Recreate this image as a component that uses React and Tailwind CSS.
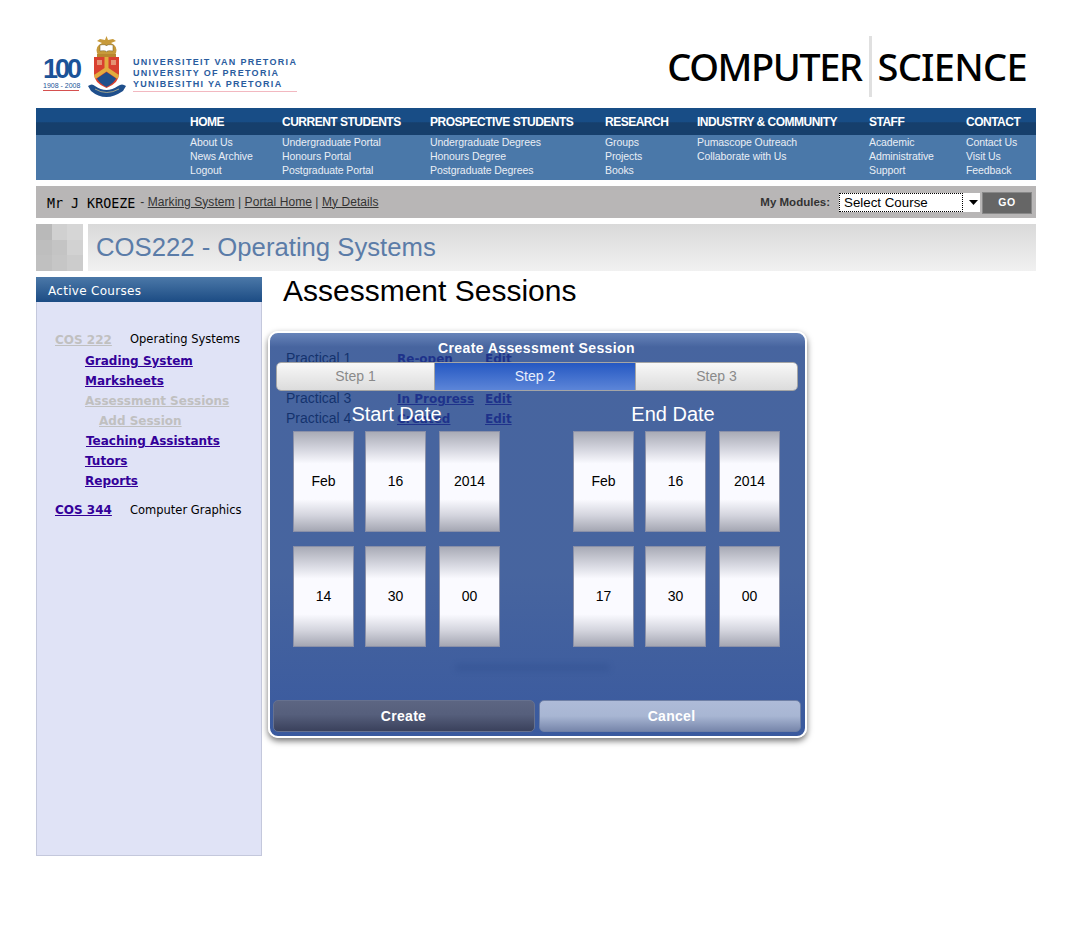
const arial = { fontFamily: '"Liberation Sans", Arial, sans-serif' };
const dv = { fontFamily: '"DejaVu Sans", Verdana, sans-serif' };

const navCols = [
  { w: 'w-[92px]', h: 'HOME', items: ['About Us', 'News Archive', 'Logout'] },
  { w: 'w-[148px]', h: 'CURRENT STUDENTS', items: ['Undergraduate Portal', 'Honours Portal', 'Postgraduate Portal'] },
  { w: 'w-[175px]', h: 'PROSPECTIVE STUDENTS', items: ['Undergraduate Degrees', 'Honours Degree', 'Postgraduate Degrees'] },
  { w: 'w-[92px]', h: 'RESEARCH', items: ['Groups', 'Projects', 'Books'] },
  { w: 'w-[172px]', h: 'INDUSTRY & COMMUNITY', items: ['Pumascope Outreach', 'Collaborate with Us'] },
  { w: 'w-[97px]', h: 'STAFF', items: ['Academic', 'Administrative', 'Support'] },
  { w: 'w-[70px]', h: 'CONTACT', items: ['Contact Us', 'Visit Us', 'Feedback'] },
];

function Crest() {
  return (
    <svg width="38" height="61" viewBox="0 0 38 61" className="mt-[36px] ml-[6px] shrink-0">
      <path d="M14 7 L9 5 L12 3 L17 4 L18.5 0 L20 4 L25 3 L28 5 L23 7 Q30 10 28 17 L26 20 H11 L9 17 Q7 10 14 7Z" fill="#c79a3a" />
      <path d="M12 9 Q18 8 18.5 10 Q19 8 25 9 V15 Q19 14 18.5 16 Q18 14 12 15Z" fill="#ffffff" stroke="#6b5a2a" strokeWidth="0.5" />
      <rect x="9" y="18" width="19" height="3" fill="#b8862e" />
      <path d="M6 21 H31 V38 Q31 47 18.5 52 Q6 47 6 38Z" fill="#d9402f" />
      <path d="M16.5 21 H20.5 V32 L31 39 L29.5 43 L18.5 35.5 L7.5 43 L6 39 L16.5 32Z" fill="#e2ac3f" />
      <path d="M18.5 36 L28 42.5 Q25 48 18.5 51 Q12 48 9 42.5Z" fill="#1f4f8c" />
      <rect x="9" y="24" width="5" height="5" fill="#ecc9a0" opacity="0.6" />
      <rect x="23" y="24" width="5" height="5" fill="#ecc9a0" opacity="0.6" />
      <path d="M0 50 Q4 47 7 50 Q18.5 58 30 50 Q34 47 38 50 L35 55 Q26 61 18.5 61 Q10 61 3 55Z" fill="#1f4f8c" />
      <path d="M7 53 Q18.5 60 31 53" fill="none" stroke="#d6c48a" strokeWidth="0.7" />
    </svg>
  );
}

function Wheel({ text }) {
  return (
    <div className="w-[61px] h-[101px] flex items-center justify-center border border-[#8a90a8] bg-[linear-gradient(to_bottom,#a9abb6_0%,#d6d7e0_18%,#fafaff_32%,#fafaff_68%,#d4d5de_84%,#a5a7b3_100%)] text-[14px] text-black">
      {text}
    </div>
  );
}

function DateColumn({ title, rows, className, titleClass }) {
  return (
    <div className={className}>
      <div className={`text-[20px] leading-[24px] text-white text-center ${titleClass}`}>{title}</div>
      <div className="flex flex-col gap-[14px] mt-[5px]">
        {rows.map((r, i) => (
          <div key={i} className="flex">
            <Wheel text={r[0]} />
            <div className="ml-[11px]"><Wheel text={r[1]} /></div>
            <div className="ml-[13px]"><Wheel text={r[2]} /></div>
          </div>
        ))}
      </div>
    </div>
  );
}

function Modal() {
  return (
    <div
      style={arial}
      className="absolute left-[6px] top-[54px] w-[539px] h-[407px] rounded-[10px] border-[2px] border-white shadow-[0_3px_6px_rgba(0,0,0,0.55)] bg-[linear-gradient(to_bottom,rgba(70,105,170,0.82)_0px,rgba(25,62,135,0.8)_14px,rgba(25,62,135,0.8)_60%,rgba(20,58,140,0.84)_100%)] px-[6px]"
    >
      <div className="text-[14px] leading-[16px] font-bold text-white text-center pt-[7px] pr-[2px] tracking-[0.4px]">Create Assessment Session</div>
      <div className="flex mt-[6px] w-[522px] h-[29px] rounded-[5px] border border-[#a5a5a5] overflow-hidden text-[14px]">
        <div className="w-[158px] flex items-center justify-center text-[#8a8a8a] bg-[linear-gradient(to_bottom,#f8f8f8,#dcdcdc)] border-r border-[#a5a5a5]">Step 1</div>
        <div className="w-[200px] flex items-center justify-center text-[#e8eefb] bg-[linear-gradient(to_bottom,#2558c2,#5c85d8)]">Step 2</div>
        <div className="flex-1 flex items-center justify-center text-[#8a8a8a] bg-[linear-gradient(to_bottom,#f8f8f8,#dcdcdc)] border-l border-[#a5a5a5]">Step 3</div>
      </div>
      <div className="flex mt-[11px]">
        <DateColumn title="Start Date" className="ml-[17px]" titleClass="" rows={[['Feb', '16', '2014'], ['14', '30', '00']]} />
        <DateColumn title="End Date" className="ml-[73px] mt-[1px]" titleClass="pr-[7px] -mt-[1px] mb-[1px]" rows={[['Feb', '16', '2014'], ['17', '30', '00']]} />
      </div>
      <div className="absolute left-[185px] top-[331px] w-[155px] h-[7px] rounded-full bg-[#1c3d7c] opacity-20 blur-[3px]" />
      <div className="absolute left-[3px] bottom-[4px] flex gap-[4px] text-[14px] font-bold text-white tracking-[0.3px]">
        <div className="w-[262px] h-[32px] pr-[1px] rounded-[5px] border border-[#66718f] flex items-center justify-center bg-[linear-gradient(to_bottom,#5c6582,#565f7c_45%,#3a415c)]">Create</div>
        <div className="w-[262px] h-[32px] pl-[3px] rounded-[5px] border border-[#6f80a6] flex items-center justify-center bg-[linear-gradient(to_bottom,#aebbd8,#a8b6d3_50%,#7786ab)]">Cancel</div>
      </div>
    </div>
  );
}

function SideLink({ children, pad, muted }) {
  return (
    <div className={`h-[20px] leading-[20px] ${pad}`}>
      <span className={`underline font-bold text-[12px] ${muted ? 'text-[#c0c0c0]' : 'text-[#330099]'}`}>{children}</span>
    </div>
  );
}

const shades = ['bg-[#b9b9b9]', 'bg-[#d0d0d0]', 'bg-[#d6d6d6]', 'bg-[#bebebe]', 'bg-[#c4c4c4]', 'bg-[#d2d2d2]', 'bg-[#c0c0c0]', 'bg-[#c6c6c6]', 'bg-[#cccccc]'];

export default function App() {
  return (
    <div style={arial} className="w-[1073px] min-h-[928px] bg-white">
      <div className="ml-[36px] w-[1000px]">
        <header className="h-[108px] flex">
          <div className="w-[46px] pl-[7px] pt-[57px] shrink-0">
            <div className="text-[27px] leading-[25px] font-bold text-[#1c5398] tracking-[-3px]">100</div>
            <div className="text-[7px] leading-[7px] text-[#1c5398] w-[36px] whitespace-nowrap">1908 - 2008</div>
            <div className="h-[1px] w-[36px] bg-[#d5504f] mt-[1px]" />
          </div>
          <Crest />
          <div className="ml-[7px] pt-[57px] text-[9px] leading-[11px] font-bold text-[#2a5c9e] tracking-[1.3px] whitespace-nowrap">
            <div>UNIVERSITEIT VAN PRETORIA</div>
            <div>UNIVERSITY OF PRETORIA</div>
            <div>YUNIBESITHI YA PRETORIA</div>
            <div className="h-[1px] bg-[#f2b8c0] mt-[1px]" />
          </div>
          <div className="ml-auto mr-[9px] flex h-[61px] mt-[36px] items-center text-[38px] font-medium text-black whitespace-nowrap" style={{ fontFamily: '"Noto Sans", sans-serif' }}>
            <span className="tracking-[-1.45px]">COMPUTER</span>
            <span className="w-[3px] h-[61px] bg-[#e0e0e0] ml-[8px] mr-[5px]" />
            <span className="tracking-[-0.7px]">SCIENCE</span>
          </div>
        </header>

        <nav className="h-[72px] bg-[#4a78a9] pl-[154px] flex relative text-white">
          <div className="absolute inset-x-0 top-0 h-[27px] bg-[linear-gradient(to_bottom,#184d86_0%,#184d86_50%,#163f6c_55%,#163f6c_100%)]" />
          {navCols.map((c) => (
            <div key={c.h} className={`${c.w} relative shrink-0`}>
              <div className="h-[27px] leading-[28px] text-[12px] font-bold tracking-[-0.5px] whitespace-nowrap">{c.h}</div>
              <div className="text-[10.5px] leading-[14px] text-[#e9eef5] whitespace-nowrap tracking-[-0.08px]">
                {c.items.map((i) => <div key={i}>{i}</div>)}
              </div>
            </div>
          ))}
        </nav>

        <div className="mt-[6px] h-[32px] bg-[#b8b6b6] flex items-center pl-[11px] pr-[4px]">
          <span className="text-[13.33px] text-black mt-[3px]" style={{ fontFamily: '"DejaVu Sans Mono", monospace' }}>Mr J KROEZE</span>
          <span className="ml-[5px] text-[12px] text-[#333] whitespace-nowrap -mt-[1px] tracking-[0.06px]">
            - <span className="underline">Marking System</span> | <span className="underline">Portal Home</span> | <span className="underline">My Details</span>
          </span>
          <span className="ml-auto text-[11.5px] font-bold text-[#333] mt-[1px]">My Modules:</span>
          <div className="ml-[9px] w-[141px] h-[19px] bg-white flex items-center">
            <div className="w-[122px] h-[17px] ml-[1px] outline-1 outline-dotted outline-black flex items-center pl-[4px] text-[13.33px] leading-[17px] text-black">Select Course</div>
            <svg width="9" height="5" viewBox="0 0 9 5" className="ml-[7px]"><path d="M0 0H9L4.5 5Z" fill="#000" /></svg>
          </div>
          <div className="ml-[2px] mt-[2px] w-[50px] h-[22px] bg-[#666] border border-[#888] flex items-center justify-center text-[10.5px] font-bold text-white tracking-[0.5px]">GO</div>
        </div>

        <div className="mt-[6px] flex h-[47px]">
          <div className="w-[47px] h-[47px] grid grid-cols-3 grid-rows-3 shrink-0">
            {shades.map((c) => <div key={c} className={c} />)}
          </div>
          <div className="ml-[5px] flex-1 pl-[8px] flex items-center bg-[linear-gradient(to_bottom,#d9d9d9,#f1f1f1)] text-[25.7px] text-[#5b7ca8]">COS222 - Operating Systems</div>
        </div>

        <div className="mt-[6px] flex">
          <aside style={dv} className="w-[226px] h-[579px] bg-[#e0e3f6] border border-[#c4c8dc] border-t-0 shrink-0">
            <div className="h-[25px] -mx-[1px] bg-[linear-gradient(to_bottom,#4b78a8,#1c4c84)] text-white text-[12px] leading-[28px] pl-[12px] tracking-[0.3px]">Active Courses</div>
            <div className="pt-[28px] pl-[18px]">
              <div className="flex items-start h-[20px]">
                <span className="underline text-[12px] font-bold text-[#c0c0c0] leading-[20px] w-[75px]">COS 222</span>
                <span className="text-[11.5px] text-black leading-[19px]">Operating Systems</span>
              </div>
              <SideLink pad="pl-[30px]">Grading System</SideLink>
              <SideLink pad="pl-[30px]">Marksheets</SideLink>
              <SideLink pad="pl-[30px]" muted>Assessment Sessions</SideLink>
              <SideLink pad="pl-[44px]" muted>Add Session</SideLink>
              <SideLink pad="pl-[31px]">Teaching Assistants</SideLink>
              <SideLink pad="pl-[30px]">Tutors</SideLink>
              <SideLink pad="pl-[30px]">Reports</SideLink>
              <div className="flex items-start h-[20px] mt-[10px]">
                <span className="underline text-[12px] font-bold text-[#330099] leading-[20px] w-[75px]">COS 344</span>
                <span className="text-[11.5px] text-black leading-[20px]">Computer Graphics</span>
              </div>
            </div>
          </aside>

          <main className="relative flex-1 pl-[21px]">
            <h1 className="text-[30px] leading-[28px] text-black font-normal whitespace-nowrap">Assessment Sessions</h1>
            <div className="mt-[43px] ml-[3px] text-[14px] leading-[20px]">
              {[['Practical 1', 'Re-open'], ['Practical 2', 'Closed'], ['Practical 3', 'In Progress'], ['Practical 4', 'Created']].map((r) => (
                <div key={r[0]} className="flex h-[20px]">
                  <div className="w-[111px] text-black">{r[0]}</div>
                  <div className="w-[88px]" style={dv}><span className="underline text-[12px] font-bold text-[#330099]">{r[1]}</span></div>
                  <div style={dv}><span className="underline text-[12px] font-bold text-[#330099]">Edit</span></div>
                </div>
              ))}
            </div>
            <Modal />
          </main>
        </div>
      </div>
    </div>
  );
}
